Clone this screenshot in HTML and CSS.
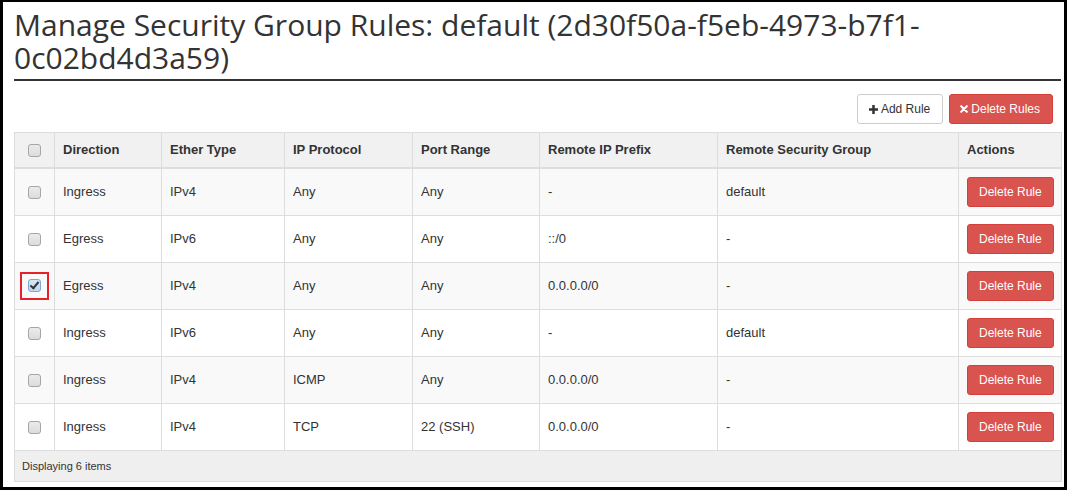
FILE: index.html
```html
<!DOCTYPE html>
<html>
<head>
<meta charset="utf-8">
<link rel="stylesheet" href="styles.css">
</head>
<body>
<div class="frame">
  <h1 class="title">Manage Security Group Rules: default (2d30f50a-f5eb-4973-b7f1-0c02bd4d3a59)</h1>
  <div class="toolbar">
    <button class="btn btn-default"><svg class="ico" viewBox="0 0 10 10" width="9" height="9"><path d="M3.6 0h2.8v3.6H10v2.8H6.4V10H3.6V6.4H0V3.6h3.6z" fill="#333"/></svg>Add Rule</button>
    <button class="btn btn-danger"><svg class="ico" viewBox="0 0 10 10" width="8" height="8"><path d="M1.5 1.5L8.5 8.5M8.5 1.5L1.5 8.5" stroke="#fff" stroke-width="2.6" stroke-linecap="round"/></svg>Delete Rules</button>
  </div>
  <table class="rules">
    <colgroup>
      <col class="w-check"><col class="w-dir"><col class="w-eth"><col class="w-proto"><col class="w-port"><col class="w-ip"><col class="w-rsg"><col class="w-act">
    </colgroup>
    <thead>
      <tr>
        <th class="cb"><input type="checkbox" class="chk"></th>
        <th>Direction</th><th>Ether Type</th><th>IP Protocol</th><th>Port Range</th><th>Remote IP Prefix</th><th>Remote Security Group</th><th>Actions</th>
      </tr>
    </thead>
    <tbody>
      <tr>
        <td class="cb"><input type="checkbox" class="chk"></td>
        <td>Ingress</td><td>IPv4</td><td>Any</td><td>Any</td><td>-</td><td>default</td>
        <td><button class="btn btn-danger btn-row">Delete Rule</button></td>
      </tr>
      <tr>
        <td class="cb"><input type="checkbox" class="chk"></td>
        <td>Egress</td><td>IPv6</td><td>Any</td><td>Any</td><td>::/0</td><td>-</td>
        <td><button class="btn btn-danger btn-row">Delete Rule</button></td>
      </tr>
      <tr>
        <td class="cb"><span class="mark"><input type="checkbox" class="chk checked" checked></span></td>
        <td>Egress</td><td>IPv4</td><td>Any</td><td>Any</td><td>0.0.0.0/0</td><td>-</td>
        <td><button class="btn btn-danger btn-row">Delete Rule</button></td>
      </tr>
      <tr>
        <td class="cb"><input type="checkbox" class="chk"></td>
        <td>Ingress</td><td>IPv6</td><td>Any</td><td>Any</td><td>-</td><td>default</td>
        <td><button class="btn btn-danger btn-row">Delete Rule</button></td>
      </tr>
      <tr>
        <td class="cb"><input type="checkbox" class="chk"></td>
        <td>Ingress</td><td>IPv4</td><td>ICMP</td><td>Any</td><td>0.0.0.0/0</td><td>-</td>
        <td><button class="btn btn-danger btn-row">Delete Rule</button></td>
      </tr>
      <tr>
        <td class="cb"><input type="checkbox" class="chk"></td>
        <td>Ingress</td><td>IPv4</td><td>TCP</td><td>22 (SSH)</td><td>0.0.0.0/0</td><td>-</td>
        <td><button class="btn btn-danger btn-row">Delete Rule</button></td>
      </tr>
    </tbody>
    <tfoot>
      <tr><td colspan="8" class="foot">Displaying 6 items</td></tr>
    </tfoot>
  </table>
</div>
</body>
</html>
```
FILE: styles.css
```css
html, body {
  margin: 0;
  padding: 0;
  background: #fff;
}
body {
  font-family: "Liberation Sans", Arial, sans-serif;
  font-size: 13px;
  color: #333;
}
.frame {
  box-sizing: border-box;
  width: 1067px;
  height: 490px;
  border: 3px solid #000;
  border-top-width: 2px;
  padding: 6px 3px 0 11px;
}
.title {
  margin: 0;
  font-family: "Open Sans", "Noto Sans", sans-serif;
  font-weight: 400;
  font-size: 30px;
  line-height: 33px;
  color: #333;
  padding-bottom: 5px;
  border-bottom: 2px solid #333;
}
.toolbar {
  display: flex;
  justify-content: flex-end;
  gap: 6px;
  margin: 13px 8px 8px 0;
}
.btn {
  box-sizing: border-box;
  display: inline-flex;
  align-items: center;
  white-space: nowrap;
  font-family: "Liberation Sans", Arial, sans-serif;
  font-size: 12px;
  line-height: 18px;
  height: 30px;
  padding: 5px 11px;
  border-radius: 3px;
  border: 1px solid #ccc;
  cursor: pointer;
}
.btn-default {
  background: #fff;
  color: #333;
  padding: 5px 12px 5px 11px;
}
.btn-danger {
  background: #d9534f;
  border-color: #d43f3a;
  color: #fff;
  padding: 5px 12px 5px 10px;
}
.ico {
  margin-right: 3px;
}
.rules .btn-row {
  padding: 5px 11px;
}
.rules {
  width: 1047px;
  border-collapse: collapse;
  table-layout: fixed;
}
.w-check { width: 40px; }
.w-dir { width: 107px; }
.w-eth { width: 123px; }
.w-proto { width: 128px; }
.w-port { width: 127px; }
.w-ip { width: 178px; }
.w-rsg { width: 241px; }
.w-act { width: 103px; }
.rules th, .rules td {
  border: 1px solid #ddd;
  padding: 8px;
  line-height: 18px;
  text-align: left;
  vertical-align: middle;
}
.rules th {
  background: #f1f1f1;
  font-weight: 700;
  border-bottom: 2px solid #ddd;
}
.rules tbody tr:nth-child(odd) td {
  background: #f9f9f9;
}
.rules tbody tr:nth-child(even) td {
  background: #fff;
}
.rules .cb {
  text-align: center;
  padding: 8px 0;
}
.rules .foot {
  background: #efefef;
  font-size: 11px;
  line-height: 14px;
  padding: 8px 7px;
}
.chk {
  appearance: none;
  -webkit-appearance: none;
  box-sizing: border-box;
  width: 13px;
  height: 13px;
  margin: 0;
  vertical-align: middle;
  border: 1px solid #a6a6a6;
  border-radius: 3px;
  background: linear-gradient(#ebebeb, #dcdcdc);
  position: relative;
}
.chk.checked {
  border-color: #7aa7dc;
  background: linear-gradient(#d8e6f5, #c4d6ec);
}
.chk.checked::after {
  content: "";
  position: absolute;
  left: 3px;
  top: 0px;
  width: 3px;
  height: 7px;
  border-right: 2px solid #333;
  border-bottom: 2px solid #333;
  transform: rotate(40deg);
}
.mark {
  display: inline-block;
  padding: 5px 6px 6px;
  border: 2px solid #e5212a;
  line-height: 0;
  vertical-align: middle;
}
```
